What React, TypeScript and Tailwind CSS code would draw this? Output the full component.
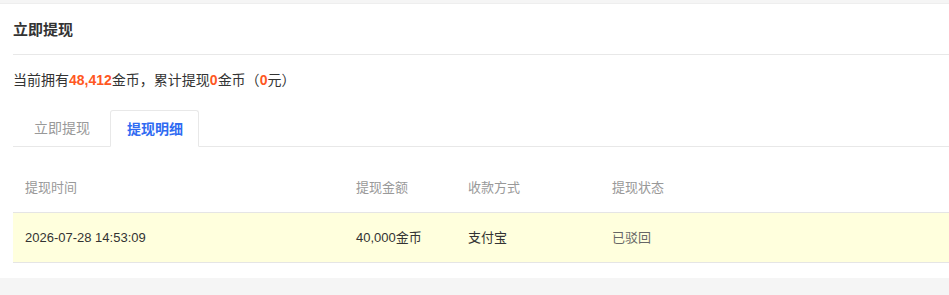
const font = { fontFamily: '"Liberation Sans", "Noto Sans CJK SC", sans-serif' };

const rows = [
  { time: '2026-07-28 14:53:09', amount: '40,000金币', method: '支付宝', status: '已驳回' },
];

export default function App() {
  return (
    <div className="h-[295px] w-[949px] overflow-hidden bg-[#f5f5f5] pt-[3px] text-[#333]" style={font}>
      <div className="border-t border-[#eeeeee] bg-white pb-[15px] pl-[13px]">
        {/* Title */}
        <div className="flex h-[51px] items-center border-b border-[#e8e8e8] text-[15px] font-bold leading-none">
          立即提现
        </div>

        {/* Summary */}
        <div className="flex h-[50px] items-center text-sm leading-none">
          当前拥有<span className="font-bold text-[#ff5722]">48,412</span>金币，累计提现
          <span className="font-bold text-[#ff5722]">0</span>金币（<span className="font-bold text-[#ff5722]">0</span>元）
        </div>

        {/* Tabs */}
        <div className="mt-[5px] flex h-[37px] items-end border-b border-[#e8e8e8] text-sm leading-none">
          <div className="flex h-[36px] items-center pl-[21px] pr-[20px] text-[#999]">立即提现</div>
          <div className="-mb-px flex h-[37px] items-center rounded-t-[3px] border border-b-white border-[#e8e8e8] bg-white pl-4 pr-[15px] font-bold text-[#2f6bf2]">
            提现明细
          </div>
        </div>

        {/* Table */}
        <div className="mt-4 text-[13px] leading-none">
          <div className="flex h-[50px] items-center border-b border-[#e5e5e5] text-[#999]">
            <div className="w-[331px] pl-3">提现时间</div>
            <div className="w-[112px] pl-3">提现金额</div>
            <div className="w-[144px] pl-3">收款方式</div>
            <div className="flex-1 pl-3">提现状态</div>
          </div>
          {rows.map((r) => (
            <div key={r.time} className="flex h-[50px] items-center border-b border-[#e5e5e5] bg-[#ffffdd]">
              <div className="w-[331px] pl-3">{r.time}</div>
              <div className="w-[112px] pl-3">{r.amount}</div>
              <div className="w-[144px] pl-3">{r.method}</div>
              <div className="flex-1 pl-3 text-[#666]">{r.status}</div>
            </div>
          ))}
        </div>
      </div>
    </div>
  );
}
